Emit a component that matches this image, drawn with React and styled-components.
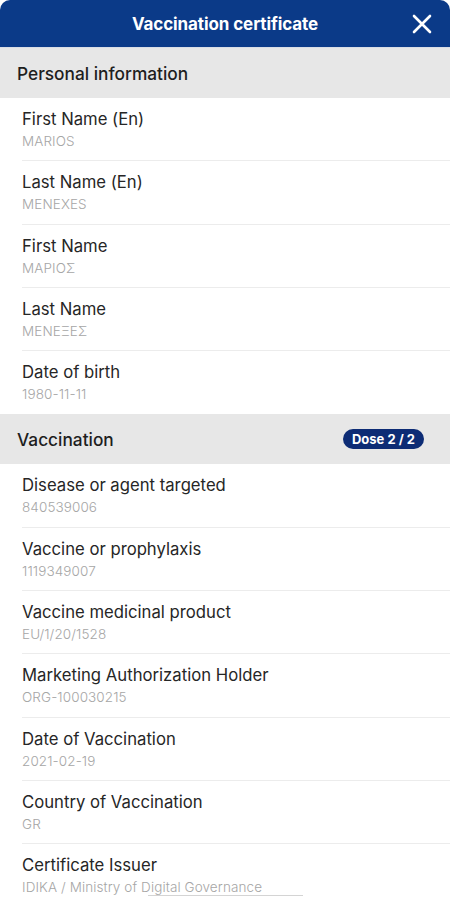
import React from "react";
import styled, { createGlobalStyle } from "styled-components";

const Global = createGlobalStyle`
  html, body { margin: 0; padding: 0; background: #ffffff; }
  body { font-family: Inter, "Liberation Sans", Arial, sans-serif; -webkit-font-smoothing: antialiased; }
  * { box-sizing: border-box; }
`;

const Screen = styled.div`
  width: 450px;
  height: 900px;
  overflow: hidden;
  background: #ffffff;
  display: flex;
  flex-direction: column;
  position: relative;
`;

const Header = styled.header`
  height: 48px;
  flex: none;
  background: #0b3a88;
  border-radius: 10px 10px 0 0;
  display: flex;
  align-items: center;
  justify-content: center;
  position: relative;
  border-bottom: 1px solid #d9dde6;
`;

const Title = styled.h1`
  margin: 0;
  color: #ffffff;
  font-size: 17px;
  font-weight: 700;
  letter-spacing: -0.1px;
`;

const Close = styled.button`
  position: absolute;
  right: 16px;
  top: 12px;
  width: 24px;
  height: 24px;
  padding: 0;
  border: 0;
  background: transparent;
  display: flex;
  align-items: center;
  justify-content: center;
`;

const SectionHeader = styled.div`
  height: 50px;
  flex: none;
  background: #e7e7e7;
  display: flex;
  align-items: center;
  justify-content: space-between;
  padding: 0 26px 0 17px;
  font-size: 17.3px;
  color: #1e1e1e;
  font-weight: 500;
`;

const Badge = styled.span`
  background: #0d2c75;
  color: #ffffff;
  font-size: 13px;
  font-weight: 700;
  border-radius: 10px;
  padding: 3px 9px;
  line-height: 14px;
`;

const Row = styled.div`
  height: 63.3px;
  flex: none;
  margin-left: 22px;
  padding-top: 11px;
  border-bottom: ${(p) => (p.$last ? "none" : "1px solid #ececec")};
  display: flex;
  flex-direction: column;
`;

const Label = styled.div`
  font-size: 16.7px;
  line-height: 21px;
  color: #262626;
`;

const Value = styled.div`
  font-size: 13.5px;
  line-height: 18px;
  margin-top: 2px;
  color: #a6a6a6;
  font-weight: 300;
  letter-spacing: 0.1px;
`;

const HomeBar = styled.div`
  position: absolute;
  bottom: 4px;
  left: 148px;
  width: 155px;
  height: 1px;
  background: #d4d4d4;
`;

const personal = [
  ["First Name (En)", "MARIOS"],
  ["Last Name (En)", "MENEXES"],
  ["First Name", "ΜΑΡΙΟΣ"],
  ["Last Name", "ΜΕΝΕΞΕΣ"],
  ["Date of birth", "1980-11-11"],
];

const vaccination = [
  ["Disease or agent targeted", "840539006"],
  ["Vaccine or prophylaxis", "1119349007"],
  ["Vaccine medicinal product", "EU/1/20/1528"],
  ["Marketing Authorization Holder", "ORG-100030215"],
  ["Date of Vaccination", "2021-02-19"],
  ["Country of Vaccination", "GR"],
  ["Certificate Issuer", "IDIKA / Ministry of Digital Governance"],
];

export default function App() {
  return (
    <>
      <Global />
      <Screen>
        <Header>
          <Title>Vaccination certificate</Title>
          <Close aria-label="Close">
            <svg width="22" height="22" viewBox="0 0 22 22">
              <path d="M3 3 L19 19 M19 3 L3 19" stroke="#ffffff" strokeWidth="2.6" strokeLinecap="round" />
            </svg>
          </Close>
        </Header>
        <SectionHeader>Personal information</SectionHeader>
        {personal.map(([l, v], i) => (
          <Row key={l} $last={i === personal.length - 1}>
            <Label>{l}</Label>
            <Value>{v}</Value>
          </Row>
        ))}
        <SectionHeader>
          Vaccination
          <Badge>Dose 2 / 2</Badge>
        </SectionHeader>
        {vaccination.map(([l, v], i) => (
          <Row key={l} $last={i === vaccination.length - 1}>
            <Label>{l}</Label>
            <Value>{v}</Value>
          </Row>
        ))}
        <HomeBar />
      </Screen>
    </>
  );
}
